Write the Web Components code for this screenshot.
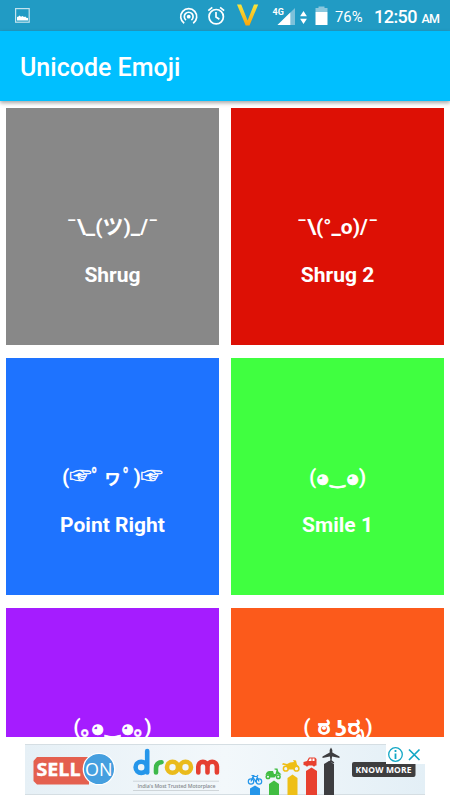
<!DOCTYPE html>
<html lang="en">
<head>
<meta charset="utf-8">
<title>Unicode Emoji</title>
<style>
    html, body{
        margin: 0;
        height: 100%;
        background: #fff;
        overflow: hidden;
        font-family: Roboto, "Noto Sans CJK JP", "DejaVu Sans", sans-serif;
    }
</style>
</head>
<body>
<emoji-app></emoji-app>

<script>
class StatusBar extends HTMLElement{
    constructor(){
        super();
        let shadow = this.attachShadow({mode: 'open'});
        shadow.innerHTML = `
            <style>
                :host{
                    display: flex;
                    height: 31px;
                    background: #219bc4;
                    color: #fff;
                }
                svg{
                    display: block;
                    width: 450px;
                    height: 31px;
                }
                text{ fill: #fff; }
            </style>
            <svg viewBox="0 0 450 31">
                <defs>
                    <linearGradient id="gold" x1="0" y1="0" x2="0" y2="1">
                        <stop offset="0" stop-color="#f8e63c"/>
                        <stop offset="1" stop-color="#f9a50c"/>
                    </linearGradient>
                </defs>
                <rect x="15.6" y="8.6" width="13.6" height="13.6" fill="none" stroke="#c3e3ee" stroke-width="1.2"/>
                <path d="M17 20.5v-3.500l1.500-.5 1-1 1.500 1.200 1.500-.8 1.500 1 1.300-.3 1 1.200 1.700.2v2.500z" fill="#fff"/>
                <g fill="none" stroke="#fff" stroke-width="1.7">
                    <path d="M184.200 23.300a8 8 0 1 1 9 0"/>
                    <path d="M186 20.100a4.400 4.400 0 1 1 5.400 0"/>
                </g>
                <circle cx="188.700" cy="16.700" r="1.900" fill="#fff"/>
                <g fill="none" stroke="#fff" stroke-width="1.700">
                    <circle cx="216.200" cy="16.700" r="7.200"/>
                    <path d="M216 12v5l3.400 2.200M208.300 10.600l4-3.300M224.100 10.600l-4-3.300"/>
                </g>
                <path d="M237 4.500h4.200l6.400 16L254 4.500h4.200l-8.700 21h-3.800z" fill="url(#gold)"/>
                <path d="M295 8v17h-17.500z" fill="#7cc1da"/>
                <path d="M290.300 12.500V25h-12.800z" fill="#fff"/>
                <text x="272.600" y="15" font-size="9" font-weight="700" textLength="11.200">4G</text>
                <path d="M303.500 11l3.400 5.300h-6.800zM303.500 24l3.400-5.300h-6.800z" fill="#fff"/>
                <path d="M315.500 8h3V6.500h6V8h3v4h-12z" fill="#8bc8de"/>
                <path d="M315.500 12h12v13h-12z" fill="#fff"/>
                <text x="335" y="21.800" font-size="15.500" textLength="27.500" lengthAdjust="spacingAndGlyphs">76%</text>
                <text x="374" y="22.800" font-size="18" font-weight="500" textLength="43.500">12:50</text>
                <text x="421.500" y="22.800" font-size="12.500" font-weight="500" textLength="18.500">AM</text>
            </svg>`;
    }
}

class AppBar extends HTMLElement{
    constructor(){
        super();
        let shadow = this.attachShadow({mode: 'open'});
        shadow.innerHTML = `
            <style>
                :host{
                    display: flex;
                    align-items: center;
                    height: 70px;
                    padding: 3px 20px 0;
                    box-sizing: border-box;
                    background: #00bfff;
                    color: #fff;
                    font-size: 25px;
                    font-weight: 500;
                    box-shadow: 0 2px 4px rgba(0,0,0,.35);
                    position: relative;
                }
            </style>
            <slot></slot>`;
    }
}

class EmojiCard extends HTMLElement{
    constructor(){
        super();
        let shadow = this.attachShadow({mode: 'open'});
        let label = this.getAttribute('data-label');
        shadow.innerHTML = `
            <style>
                :host{
                    display: flex;
                    flex-direction: column;
                    align-items: center;
                    height: 237.500px;
                    padding-top: 104px;
                    box-sizing: border-box;
                    background: ${this.getAttribute('data-color')};
                    color: #fff;
                    font-size: 21px;
                    font-weight: 700;
                    line-height: 30px;
                    white-space: nowrap;
                }
                .face{
                    display: flex;
                    align-items: baseline;
                    height: 30px;
                }
                .label{ margin-top: 18px; }
            </style>
            <div class="face"><slot></slot></div>
            ${label ? `<div class="label">${label}</div>` : ''}`;
    }
}

// one glyph of a face, with its own advance width and size
class FaceGlyph extends HTMLElement{
    constructor(){
        super();
        let shadow = this.attachShadow({mode: 'open'});
        let width = this.getAttribute('data-width');
        let size = this.getAttribute('data-size') || 21;
        let stroke = this.getAttribute('data-stroke') || 0;
        let lift = this.getAttribute('data-lift') || 0;
        let stretch = this.getAttribute('data-stretch') || 1;
        shadow.innerHTML = `
            <style>
                :host{
                    display: flex;
                    justify-content: center;
                    width: ${width}px;
                    font-size: ${size}px;
                    -webkit-text-stroke: ${stroke}px #fff;
                    line-height: 30px;
                    white-space: pre;
                }
                span{ transform: translateY(${-lift}px) scaleX(${stretch}); }
            </style>
            <span><slot></slot></span>`;
    }
}

class AdBanner extends HTMLElement{
    constructor(){
        super();
        let shadow = this.attachShadow({mode: 'open'});
        shadow.innerHTML = `
            <style>
                :host{
                    display: flex;
                    justify-content: center;
                    height: 63px;
                    padding-top: 7px;
                    box-sizing: border-box;
                    background: #fff;
                }
                svg{
                    display: block;
                    width: 400px;
                    height: 51px;
                }
            </style>
            <svg viewBox="25 744 400 51">
                <defs>
                    <linearGradient id="sky">
                        <stop offset="0" stop-color="#e6f0f6"/>
                        <stop offset=".5" stop-color="#f3f8fb"/>
                        <stop offset="1" stop-color="#e3eff6"/>
                    </linearGradient>
                </defs>
                <rect x="25" y="744" width="400" height="51" fill="url(#sky)"/>
                <path d="M25 744.500h400M25 794.500h400" stroke="#d5dee3"/>
                <path d="M37 757h52v27.500H37l-3.500-3.500v-20z" fill="#e4604f"/>
                <circle cx="99" cy="769" r="15.700" fill="#459fdf" stroke="#fff" stroke-width="1.300"/>
                <text x="36.500" y="775.800" font-family="Open Sans" font-size="18.500" font-weight="700" fill="#fff" stroke="#fff" stroke-width=".4" textLength="44" lengthAdjust="spacingAndGlyphs">SELL</text>
                <text x="85" y="775.800" font-family="Open Sans" font-size="18.500" fill="#fff" textLength="27.500" lengthAdjust="spacingAndGlyphs">ON</text>
                <g fill="none" stroke-width="4.600">
                    <path d="M147.200 751v21.500" stroke="#2596ea" stroke-linecap="round"/>
                    <circle cx="141.200" cy="767.300" r="5.600" stroke="#2596ea"/>
                    <path d="M156 772.500v-4q0-6 5.500-6.300" stroke="#3db94b" stroke-linecap="round"/>
                    <circle cx="172.500" cy="767.300" r="5.500" stroke="#eabb1c"/>
                    <circle cx="185.500" cy="767.300" r="5.500" stroke="#eabb1c"/>
                    <path d="M198.300 772.500v-6a4.600 4.600 0 0 1 9.200 0v6M207.500 766.500a4.700 4.700 0 0 1 9.400 0v6" stroke="#e53f31" stroke-linecap="round"/>
                </g>
                <path d="M133.500 781.200h85M133.500 790.500h85" stroke="#aeb5b9" stroke-dasharray="1 1"/>
                <text x="137.500" y="787.800" font-family="Open Sans" font-size="5.200" font-weight="600" fill="#888d90" textLength="78">India's Most Trusted Motorplace</text>

                <path d="M250 795v-6.500l5-3 5 3v6.500z" fill="#2596ea"/>
                <path d="M269 795v-11l5-3.500 5 3.500v11z" fill="#41bd42"/>
                <path d="M287.500 795v-17l5-3.500 5 3.500v17z" fill="#eebf17"/>
                <path d="M306 795v-24l5.500-3.500 5.500 3.500v24z" fill="#e8402f"/>
                <path d="M324 795v-31l5-3 5 3v31z" fill="#3d3d40"/>
                <g fill="none" stroke="#2596ea" stroke-width="1.200">
                    <circle cx="251" cy="781.500" r="2.700"/>
                    <circle cx="259" cy="781.500" r="2.700"/>
                    <path d="M251 781.500l2-5h4l2 5M253 777l2.500 4.500 2-4.500M251.500 775.500h3M257 776.500l1-1.500"/>
                </g>
                <g fill="none" stroke="#41bd42">
                    <circle cx="268" cy="776.800" r="1.800" stroke-width="1.500"/>
                    <circle cx="278.300" cy="776.800" r="1.800" stroke-width="1.500"/>
                </g>
                <path d="M265.500 775q1-4 4-4h3.500l1 3h1.500l1-4-2-.5v-1h3l.8 3 3.200 3-2 .3-2-1-3 3.700h-4l-2-3z" fill="#41bd42"/>
                <g fill="none" stroke="#eebf17" stroke-width="1.500">
                    <circle cx="285.800" cy="768.700" r="2.400"/>
                    <circle cx="296.500" cy="768.700" r="2.400"/>
                </g>
                <path d="M283 763l4 1 3-1.500 4-.5-1-2 3 .5 1 4 2 2-3-.5-2 3.500h-6l-2-4-4-1z" fill="#eebf17"/>
                <path d="M303.500 765v-3l3.500-1 2-3.500h6l1.500 1.500v6.500h-1a1.600 1.600 0 0 1-3 0h-4a1.600 1.600 0 0 1-3 0z" fill="#e8402f"/>
                <path d="M308.500 761l1.300-2.500h1.700v2.500zM312.500 758.500h2v2.500h-2z" fill="#fff"/>
                <path d="M331 747.500q1.500 1.500 1.300 5l7.200 4v1.500l-7.400-1.500-.5 3.800 2.500 2v1l-3.100-.8-3.100.8v-1l2.500-2-.5-3.800-7.400 1.500v-1.500l7.200-4q-.2-3.500 1.300-5z" fill="#3d3d40"/>

                <rect x="352" y="762" width="63.500" height="15" rx="2" fill="#3e3e3f"/>
                <rect x="386" y="744" width="39" height="20" fill="#fff"/>
                <text x="355.500" y="772.500" font-family="Open Sans" font-size="8.500" font-weight="700" fill="#fff" textLength="56">KNOW MORE</text>
                <circle cx="395.500" cy="754.500" r="6.800" fill="none" stroke="#12a7c5" stroke-width="1.300"/>
                <path d="M395.500 750v2M395.500 753.500v5.500" stroke="#12a7c5" stroke-width="1.800"/>
                <path d="M409 749.500l10.500 10.500M419.500 749.500L409 760" stroke="#12a7c5" stroke-width="1.700"/>
            </svg>`;
    }
}

class EmojiApp extends HTMLElement{
    constructor(){
        super();
        let shadow = this.attachShadow({mode: 'open'});
        let eye = '<face-glyph data-width="12.500" data-size="13" data-stroke="1.100" data-lift="1">◕</face-glyph>';
        let mouth = '<face-glyph data-width="17.500" data-size="17.500" data-stroke=".8">‿</face-glyph>';
        let hand = '<face-glyph data-width="22" data-size="22" data-stroke=".5" data-lift="1">☞</face-glyph>';
        let mark = '<face-glyph data-width="10.500" data-stroke=".3" data-lift="-1">ﾟ</face-glyph>';
        let cheek = '<face-glyph data-width="10.500" data-stroke=".5">｡</face-glyph>';
        shadow.innerHTML = `
            <style>
                :host{
                    display: flex;
                    flex-direction: column;
                    height: 800px;
                    width: 450px;
                }
                status-bar, app-bar, ad-banner{ flex: none; }
                main{
                    flex: 1;
                    min-height: 0;
                    overflow: hidden;
                    display: grid;
                    grid-template-columns: 1fr 1fr;
                    align-content: start;
                    gap: 12.500px 12.600px;
                    padding: 6.500px 6.250px 0;
                }
            </style>
            <status-bar></status-bar>
            <app-bar>Unicode Emoji</app-bar>
            <main>
                <emoji-card data-color="#888888" data-label="Shrug">¯\\_(ツ)_/¯</emoji-card>
                <emoji-card data-color="#dd1005" data-label="Shrug 2">¯\\(°_o)/¯</emoji-card>
                <emoji-card data-color="#1e73ff" data-label="Point Right">(${hand}${mark}<face-glyph data-width="21" data-size="19">ヮ</face-glyph>${mark})${hand}</emoji-card>
                <emoji-card data-color="#40ff40" data-label="Smile 1">(${eye}${mouth}${eye})</emoji-card>
                <emoji-card data-color="#a51cff">(${cheek}${eye}${mouth}${eye}${cheek})</emoji-card>
                <emoji-card data-color="#fc5a1b"><face-glyph data-width="8">(</face-glyph><face-glyph data-width="25" data-size="23" data-stroke=".5">ಠ</face-glyph><face-glyph data-width="10" data-lift="-2">ʖ̯</face-glyph><face-glyph data-width="20" data-size="23" data-stroke=".5">ರೃ</face-glyph><face-glyph data-width="6">)</face-glyph></emoji-card>
            </main>
            <ad-banner></ad-banner>`;
    }
}

window.customElements.define('status-bar', StatusBar)
window.customElements.define('app-bar', AppBar)
window.customElements.define('face-glyph', FaceGlyph)
window.customElements.define('emoji-card', EmojiCard)
window.customElements.define('ad-banner', AdBanner)
window.customElements.define('emoji-app', EmojiApp)
</script>
</body>
</html>
